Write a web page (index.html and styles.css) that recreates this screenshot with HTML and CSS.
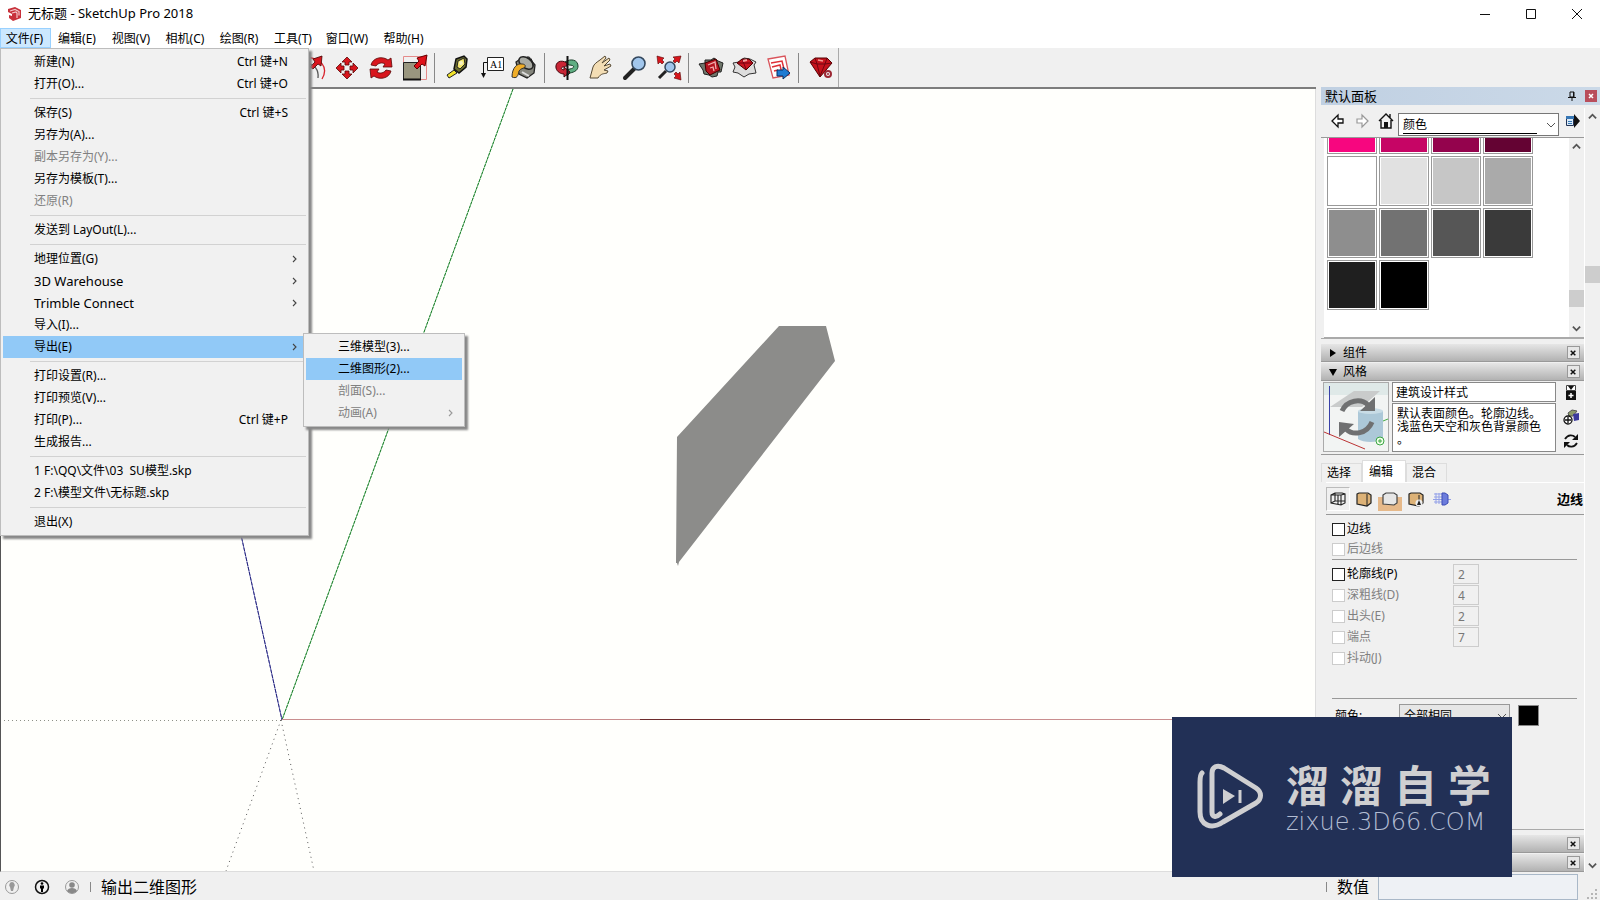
FILE: index.html
```html
<!DOCTYPE html>
<html lang="zh-CN">
<head>
<meta charset="utf-8">
<title>无标题 - SketchUp Pro 2018</title>
<link rel="stylesheet" href="styles.css">
</head>
<body>
<svg class="defs" aria-hidden="true">
  <symbol id="i-close" viewBox="0 0 12 12"><path d="M3 4l5 5M8 4L3 9" stroke="#111" stroke-width="1.6"/></symbol>
  <symbol id="i-chev" viewBox="0 0 10 10"><path d="M3 2l3 3-3 3" fill="none" stroke="currentColor" stroke-width="1.1"/></symbol>
  <symbol id="i-down" viewBox="0 0 10 10"><path d="M1 3l4 4 4-4" fill="none" stroke="currentColor" stroke-width="var(--w, 1)"/></symbol>
  <symbol id="i-up" viewBox="0 0 10 10"><path d="M1 7l4-4 4 4" fill="none" stroke="currentColor" stroke-width="2"/></symbol>
</svg>

<header class="titlebar">
  <svg class="app-icon" viewBox="0 0 14 14"><path d="M0 2l7-2 6 3v8l-8 3-4-3v-3l3 1V7L0 5z" fill="#c8313b"/><path d="M2 4l5-1.500 4 2v4M4 6l4-1 1 1v5" fill="none" stroke="#f3c9cb" stroke-width="1.200"/></svg>
  <h1>无标题 - SketchUp Pro 2018</h1>
  <div class="window-buttons">
    <button aria-label="最小化"><svg viewBox="0 0 12 12"><path d="M1 6.500h10" stroke="#111"/></svg></button>
    <button aria-label="最大化"><svg viewBox="0 0 12 12"><path d="M1.500 1.500h9v9h-9z" stroke="#111" fill="none"/></svg></button>
    <button aria-label="关闭"><svg viewBox="0 0 12 12"><path d="M1 1l10 10M11 1L1 11" stroke="#111"/></svg></button>
  </div>
</header>

<nav class="menubar">
  <button class="open">文件(F)</button><button>编辑(E)</button><button>视图(V)</button><button>相机(C)</button><button>绘图(R)</button><button>工具(T)</button><button>窗口(W)</button><button>帮助(H)</button>
  <div class="menu file-menu">
    <button>新建(N)<span class="key">Ctrl 键+N</span></button>
    <button>打开(O)...<span class="key">Ctrl 键+O</span></button>
    <hr>
    <button>保存(S)<span class="key">Ctrl 键+S</span></button>
    <button>另存为(A)...</button>
    <button disabled>副本另存为(Y)...</button>
    <button>另存为模板(T)...</button>
    <button disabled>还原(R)</button>
    <hr>
    <button>发送到 LayOut(L)...</button>
    <hr>
    <button>地理位置(G)<svg class="arrow"><use href="#i-chev"/></svg></button>
    <button class="latin">3D Warehouse<svg class="arrow"><use href="#i-chev"/></svg></button>
    <button class="latin">Trimble Connect<svg class="arrow"><use href="#i-chev"/></svg></button>
    <button>导入(I)...</button>
    <div class="has-sub">
      <button class="hot">导出(E)<svg class="arrow"><use href="#i-chev"/></svg></button>
      <div class="menu submenu">
        <button>三维模型(3)...</button>
        <button class="hot">二维图形(2)...</button>
        <button disabled>剖面(S)...</button>
        <button disabled>动画(A)<svg class="arrow"><use href="#i-chev"/></svg></button>
      </div>
    </div>
    <hr>
    <button>打印设置(R)...</button>
    <button>打印预览(V)...</button>
    <button>打印(P)...<span class="key">Ctrl 键+P</span></button>
    <button>生成报告...</button>
    <hr>
    <button>1 F:\QQ\文件\03&nbsp; SU模型.skp</button>
    <button>2 F:\模型文件\无标题.skp</button>
    <hr>
    <button>退出(X)</button>
  </div>
</nav>

<div class="toolbar-row">
<div class="toolbar">
  <button aria-label="偏移"><svg viewBox="0 0 28 28"><path d="M6 3c16 1 24 10 17 22" fill="none" stroke="#d8232c" stroke-width="1.300"/><path d="M6 9c10 1 14 7 13 15" fill="none" stroke="#555" stroke-width="1.300"/><path d="M11 13l5-5-2-3 9-3-1 10-3-2-5 5z" fill="#d8161d" stroke="#400" stroke-width=".8"/></svg></button>
  <button aria-label="移动"><svg viewBox="0 0 28 28"><g fill="#d8161d" stroke="#5a0808" stroke-width=".8"><path id="mv" d="M14 3l5 5h-3v3h-4V8H9z"/><use href="#mv" transform="rotate(90 14 14)"/><use href="#mv" transform="rotate(180 14 14)"/><use href="#mv" transform="rotate(270 14 14)"/></g></svg></button>
  <button aria-label="旋转"><svg viewBox="0 0 28 28"><g fill="#d8161d" stroke="#5a0808" stroke-width=".8"><path id="rt" d="M4 11C6 3 16 2 21 6l3-2 1 9-9 0 2-3c-3-2-7-1-9 2z"/><use href="#rt" transform="rotate(180 14 14)"/></g></svg></button>
  <button aria-label="缩放"><svg viewBox="0 0 28 28"><path d="M2.500 2.500h23v23h-23z" fill="none" stroke="#e58a8a"/><path d="M2.500 8.500h17v17h-17z" fill="#99967f" stroke="#222"/><path d="M2 25.500h18" stroke="#111" stroke-width="2"/><path d="M13 12l5-5-2-3 10-3-2 11-3-2-5 5z" fill="#e01119" stroke="#600"/></svg></button>
  <i class="sep"></i>
  <button aria-label="卷尺"><svg viewBox="0 0 28 28"><path d="M4 21l7-5 3 3-8 5z" fill="#f0e22a" stroke="#222"/><path d="M13 5l8-3 3 3-1 8-7 6-5-4z" fill="#6b6d30" stroke="#111" stroke-width="1.500"/><path d="M15 7l6-3 1 6-5 5-3-2z" fill="#f3e66a" stroke="#222"/><circle cx="18" cy="9" r="2" fill="#f7f2c4"/></svg></button>
  <button aria-label="文字"><svg viewBox="0 0 28 28"><path d="M10.500 3.500h16v13h-16z" fill="#fff" stroke="#222"/><text x="13" y="14" class="tag-text">A1</text><path d="M10 8.500H6.500V21" fill="none" stroke="#111"/><path d="M4 19h5l-2.500 5z" fill="#111"/></svg></button>
  <button aria-label="材质"><svg viewBox="0 0 28 28"><path d="M5 8l6-4 7 0 6 7-1 8-7 5-8-4z" fill="#85867d" stroke="#222" stroke-width="1.300"/><ellipse cx="15" cy="9" rx="8" ry="5" fill="#a9aba4" stroke="#222" stroke-width="1.500" transform="rotate(35 15 9)"/><path d="M11 10C6 9 1 14 1 23c5 2 6-1 7-6 2-3 4-2 6-4 1-2-1-3-3-3z" fill="#efad28" stroke="#333"/><path d="M11 18l7 4" stroke="#ddd" stroke-width="2"/><path d="M16 3c3-1 6 3 6 9" fill="none" stroke="#222"/></svg></button>
  <i class="sep"></i>
  <button aria-label="环绕观察"><svg viewBox="0 0 28 28"><path d="M12 8c6-4 13-2 13 4 0 4-3 6-8 7l-3 3-1-6 4-1c5-1 5-4-1-4z" fill="#5fae82" stroke="#163d27"/><path d="M14 9C8 5 2 8 3 14c1 4 5 6 8 6v3l6-5-6-5v3c-4-1-4-3 3-4z" fill="#c92535" stroke="#420b10"/><path d="M14.500 2v24" stroke="#111" stroke-width="2"/></svg></button>
  <button aria-label="平移"><svg viewBox="0 0 28 28"><path d="M3 24l3-11c1-3 4-5 7-7l5-4 1 2-4 5 7-5 1 2-6 6 6-2 1 2-7 4 4 1-1 2c-3 1-6 0-9 5z" fill="#f3ddb4" stroke="#554934"/></svg></button>
  <button aria-label="缩放视图"><svg viewBox="0 0 28 28"><path d="M4 24l9-9" stroke="#222" stroke-width="4" stroke-linecap="round"/><circle cx="17.500" cy="9.500" r="6.500" fill="#a1c6ec" stroke="#33485e" stroke-width="1.600"/></svg></button>
  <button aria-label="充满视窗"><svg viewBox="0 0 28 28"><path d="M4 24l7-7" stroke="#222" stroke-width="3"/><circle cx="15" cy="13" r="5" fill="#a1c6ec" stroke="#33485e" stroke-width="1.500"/><g fill="#d8161d" stroke="#500" stroke-width=".6"><path d="M2 2l7 2-2 2 2 2-2 2-2-2-2 2z"/><path d="M26 2l-2 7-2-2-2 2-2-2 2-2-2-2z"/><path d="M26 26l-7-2 2-2-2-2 2-2 2 2 2-2z"/></g></svg></button>
  <i class="sep"></i>
  <button aria-label="3D Warehouse"><svg viewBox="0 0 28 28"><path d="M2 10l6-1V6l6 0 3-2 4 3 5 2-2 9-3 0-1 4-5 1-3-2-5-1-1-4z" fill="#6f776c" stroke="#222"/><path d="M8 9l11-4 4 11-10 5-4-4z" fill="#b5141f" stroke="#400"/><path d="M11 11l7-3 1 7M13 14l3-1 1 4" fill="none" stroke="#f0b0b0" stroke-width="1.300"/></svg></button>
  <button aria-label="扩展程序"><svg viewBox="0 0 28 28"><path d="M2 9l6-1 5-4 6 1 6 3-2 3 2 8-7 1-5 3-6-4-5-1 2-5z" fill="#ddd" stroke="#333"/><path d="M6 9l5-4h7l4 4-7 7z" fill="#cb1520" stroke="#400"/><path d="M6 9l8 0 8 0M11 5l4 10" stroke="#701" fill="none"/><path d="M12 7l4-1" stroke="#f6a0a0" stroke-width="2"/></svg></button>
  <button aria-label="LayOut"><svg viewBox="0 0 28 28"><path d="M3 5l17-3 4 19-16 3z" fill="#fff" stroke="#d9545b" stroke-width="1.300"/><path d="M6 9l11-2 3 12M7 13l8-2 2 9M9 17l4-1" fill="none" stroke="#df3038" stroke-width="1.500"/><path d="M12 16h6v-3l7 6-7 6v-3h-6z" fill="#1e7ad2" stroke="#0b2f60"/></svg></button>
  <i class="sep"></i>
  <button aria-label="扩展管理器"><svg viewBox="0 0 28 28"><path d="M3 8l5-4h12l5 5-12 14z" fill="#c5121c" stroke="#500"/><path d="M3 8l7 2 3 12 5-12 7-1M8 4l2 6h8l2-6" fill="none" stroke="#700610"/><path d="M11 6l5 1" stroke="#f59a91" stroke-width="1.500"/><circle cx="21" cy="20" r="3" fill="#eee" stroke="#9c2733" stroke-width="2"/><circle cx="21" cy="20" r="1" fill="#9c2733"/></svg></button>
</div>
</div>

<main class="workspace">
  <section class="viewport" aria-label="绘图区">
    <svg viewBox="1 89 1314 782" preserveAspectRatio="xMinYMin slice">
      <path d="M677 437L779 326h47l9 35-156 201-1 4-1-3h-1z" fill="#8c8c8a"/>
      <path d="M513 89L282 720" stroke="#8fd39a"/>
      <path d="M513 89L282 720" stroke="#1c7b2a" stroke-dasharray="3 1"/>
      <path d="M220 440l62 280" stroke="#8f8fd0"/>
      <path d="M220 440l62 280" stroke="#23237a" stroke-dasharray="4 1"/>
      <path d="M282 719.500h1033" stroke="#c98e8e"/>
      <path d="M640 719.500h290" stroke="#6d2b2b"/>
      <path d="M4 720.500h277" stroke="#8d9088" stroke-dasharray="1 3"/>
      <path d="M281 720l-55 151M281 720l33 151" stroke="#555" stroke-dasharray="1 4"/>
    </svg>
  </section>

  <aside class="tray">
    <header class="tray-title"><h2>默认面板</h2>
      <button aria-label="固定"><svg viewBox="0 0 10 10"><path d="M3 1h4v5H3zM1 6.500h8M5 6v4M6.500 1v5" fill="none" stroke="#111"/></svg></button>
      <button class="tray-close" aria-label="关闭面板"><svg viewBox="0 0 12 12"><path d="M4 4l4 4M8 4l-4 4" stroke="#fff" stroke-width="1.500"/></svg></button>
    </header>
    <div class="tray-body">
      <div class="panels">
        <div class="color-nav">
          <button aria-label="后退"><svg viewBox="0 0 16 16"><path d="M2 8l6-6v4h5v4H8v4z" fill="#fff" stroke="#111" stroke-width="1.300"/></svg></button>
          <button aria-label="前进"><svg viewBox="0 0 16 16"><path d="M14 8L8 2v4H3v4h5v4z" fill="#fff" stroke="#999" stroke-width="1.200"/></svg></button>
          <button aria-label="主页"><svg viewBox="0 0 16 16"><path d="M1 8l7-7 7 7M3 7v8h10V7M12 5V1" fill="none" stroke="#111" stroke-width="1.400"/><path d="M6 9h4v6H6z" fill="#111"/></svg></button>
          <div class="picker library"><select aria-label="材质库"><option>颜色</option></select><svg><use href="#i-down"/></svg></div>
          <button aria-label="详细信息"><svg viewBox="0 0 16 16"><path d="M5 4h4V1l6 7-6 7v-3H5z" fill="#111"/><path d="M1.500 3.500h7v9h-7z" fill="#d9e9f7" stroke="#235"/><path d="M1 3h8v3H1z" fill="#3777b5"/><path d="M3 8.500h4M3 10.500h4" stroke="#3777b5"/></svg></button>
        </div>
        <div class="swatch-area">
          <div class="swatches">
            <button class="cut c1" aria-label="颜色 1"></button><button class="cut c2" aria-label="颜色 2"></button><button class="cut c3" aria-label="颜色 3"></button><button class="cut c4" aria-label="颜色 4"></button>
            <button class="g1" aria-label="灰度 1"></button><button class="g2" aria-label="灰度 2"></button><button class="g3" aria-label="灰度 3"></button><button class="g4" aria-label="灰度 4"></button>
            <button class="g5" aria-label="灰度 5"></button><button class="g6" aria-label="灰度 6"></button><button class="g7" aria-label="灰度 7"></button><button class="g8" aria-label="灰度 8"></button>
            <button class="g9" aria-label="灰度 9"></button><button class="g10" aria-label="灰度 10"></button>
          </div>
          <div class="scroll inner"><svg><use href="#i-up"/></svg><i></i><svg><use href="#i-down"/></svg></div>
        </div>
        <div class="panel-heads">
          <h3><svg viewBox="0 0 8 8"><path d="M1 0l6 4-6 4z"/></svg>组件<button aria-label="关闭组件"><svg><use href="#i-close"/></svg></button></h3>
          <h3><svg viewBox="0 0 8 8"><path d="M0 1h8L4 8z"/></svg>风格<button aria-label="关闭风格"><svg><use href="#i-close"/></svg></button></h3>
        </div>
        <div class="style-info">
          <div class="preview"><svg viewBox="0 0 64 68">
            <path d="M0 0h64v68H0z" fill="#f2f4f3"/><path d="M0 0h64v12H0z" fill="#dfe9e8"/><path d="M6 24L30 8h26L38 24z" fill="#c9cbcb"/>
            <path d="M34 28v28c5 4 20 4 25 0V28z" fill="#acc8d8"/><ellipse cx="46.500" cy="28" rx="12.500" ry="3" fill="#c8dce6"/>
            <path d="M5.500 52V3" stroke="#3941a8"/><path d="M0 49l41 17" stroke="#b33"/><path d="M59 38l5-2" stroke="#4a4"/>
            <g stroke="#6f7071" stroke-width="5" fill="none"><path d="M18 28C23 17 37 15 44 22"/><path d="M48 39C43 51 29 53 22 46"/></g>
            <path d="M51 14v14H36zM15 54V39l15 2z" fill="#6f7071"/>
            <circle cx="56" cy="58" r="4" fill="#efffe8" stroke="#3aa544"/><path d="M56 56v4M54 58h4" stroke="#3aa544"/></svg></div>
          <div class="style-text">
            <input aria-label="风格名称" value="建筑设计样式">
            <textarea aria-label="风格说明">默认表面颜色。轮廓边线。浅蓝色天空和灰色背景颜色。</textarea>
          </div>
          <div class="style-tools">
            <button aria-label="显示辅助窗格"><svg viewBox="0 0 16 16"><path d="M3.500 1.500h9v5h-9z" fill="#fff" stroke="#444"/><path d="M5 2h6L8 6zM3 7h10v9H3z" fill="#111"/><path d="M8 9v5M5.500 11.500h5" stroke="#fff" stroke-width="1.500"/></svg></button>
            <button aria-label="新建风格"><svg viewBox="0 0 16 16"><path d="M5 4l4-3 5 1-4 5H6z" fill="#8c9a6a" stroke="#555"/><path d="M10 5l6-1v7l-5 1z" fill="#3b3a9c"/><circle cx="5" cy="11" r="4" fill="#fff" stroke="#111" stroke-width="1.300"/><path d="M5 8v6M2 11h6" stroke="#111" stroke-width="1.300"/></svg></button>
            <button aria-label="更新风格"><svg viewBox="0 0 16 16"><g fill="none" stroke="#111" stroke-width="1.800"><path d="M2 6c3-5 8-4 10-2M14 10c-3 5-8 4-10 2"/></g><path d="M15 1v6H9zM1 15V9h6z" fill="#111"/></svg></button>
          </div>
        </div>
        <div class="tabs"><button>选择</button><button class="active">编辑</button><button>混合</button></div>
        <div class="edit-bar">
          <button class="pressed" aria-label="边线设置"><svg viewBox="0 0 18 16"><path d="M2 4l4-2 7 0 3 1v9l-4 2-10-2zM12 4v10M2 4l10 0 4-1M2 12l4-2h10M6 2v8M9 4v9" fill="none" stroke="#222" stroke-width="1.100"/></svg></button>
          <button aria-label="平面设置"><svg viewBox="0 0 18 16"><path d="M2 3l2-1h9l3 2v8l-4 3-10-2z" fill="#ddb277" stroke="#222" stroke-width="1.200"/><path d="M12 3v12" fill="none" stroke="#222"/></svg></button>
          <button class="bg" aria-label="背景设置"><svg viewBox="0 0 18 16"><path d="M2 4l3-2h8l3 2v8l-3 2-11-1z" fill="#e6e6e6" stroke="#444" stroke-width="1.200"/></svg></button>
          <button aria-label="水印设置"><svg viewBox="0 0 18 16"><path d="M2 3l2-1h9l3 2v8l-4 3-10-2z" fill="#ddb277" stroke="#222" stroke-width="1.200"/><path d="M12 4v5" stroke="#222"/><circle cx="12" cy="12" r="3.500" fill="#eee"/><path d="M12 9l2 5h-4z" fill="#222"/></svg></button>
          <button aria-label="建模设置"><svg viewBox="0 0 18 16"><path d="M1 3h9M1 6h9M0 8.500h18M1 11h9M3 2v11M6 2v11" stroke="#92a0e8"/><path d="M9 2h3l3 2v8l-3 2H9z" fill="#6c7cdc" stroke="#3c4cb5"/></svg></button>
          <strong>边线</strong>
        </div>
        <form class="options">
          <div class="pair"><label><input type="checkbox">边线</label><label class="off"><input type="checkbox" disabled>后边线</label></div>
          <div class="rows">
            <div><label><input type="checkbox">轮廓线(P)</label><input class="num" aria-label="轮廓线宽度" value="2" disabled></div>
            <div><label class="off"><input type="checkbox" disabled>深粗线(D)</label><input class="num" aria-label="深粗线宽度" value="4" disabled></div>
            <div><label class="off"><input type="checkbox" disabled>出头(E)</label><input class="num" aria-label="出头长度" value="2" disabled></div>
            <div><label class="off"><input type="checkbox" disabled>端点</label><input class="num" aria-label="端点长度" value="7" disabled></div>
            <div><label class="off"><input type="checkbox" disabled>抖动(J)</label></div>
          </div>
          <div class="color-row"><label for="edge-color">颜色:</label><div class="picker"><select id="edge-color"><option>全部相同</option></select><svg><use href="#i-down"/></svg></div><button type="button" class="chip" aria-label="边线颜色"></button></div>
        </form>
        <div class="panel-heads last">
          <h3><button aria-label="关闭图层"><svg><use href="#i-close"/></svg></button></h3>
          <h3><button aria-label="关闭场景"><svg><use href="#i-close"/></svg></button></h3>
        </div>
      </div>
      <div class="scroll outer"><svg><use href="#i-up"/></svg><i></i><svg><use href="#i-down"/></svg></div>
    </div>
  </aside>
</main>

<footer class="status">
  <svg viewBox="0 0 16 16"><circle cx="8" cy="8" r="6.500" fill="none" stroke="#999"/><path d="M8 3a3 3 0 0 1 2 5l-1 4H7L6 8a3 3 0 0 1 2-5z" fill="#999"/></svg>
  <svg viewBox="0 0 16 16"><circle cx="8" cy="8" r="6.500" fill="none" stroke="#111" stroke-width="1.500"/><circle cx="8" cy="4.500" r="1.300"/><path d="M6 6.500h4v3H9V13H7V9.500H6z"/></svg>
  <svg viewBox="0 0 16 16"><circle cx="8" cy="8" r="6.500" fill="none" stroke="#999"/><circle cx="8" cy="6" r="2.800" fill="#888"/><path d="M3 12c1-4 9-4 10 0-3 3-7 3-10 0z" fill="#888"/></svg>
  <i></i><span class="hint">输出二维图形</span>
  <i></i><label for="vcb">数值</label><input id="vcb">
  <svg class="grip" viewBox="0 0 12 12"><path d="M9 1h2v2H9zM9 5h2v2H9zM9 9h2v2H9zM5 5h2v2H5zM5 9h2v2H5zM1 9h2v2H1z" fill="#b5b5b5"/></svg>
</footer>

<div class="brand">
  <svg viewBox="0 0 66 68"><path d="M5 10C3 12 3 15 3 19v30c0 13 11 18 23 10l33-19c6-4 6-11 0-15L27 5c-7-4-12-1-12 5v39c0 5 4 6 8 2" fill="none" stroke="#cfcfd1" stroke-width="5" stroke-linecap="round" stroke-linejoin="round"/><path d="M26 26l12 7-12 8z" fill="#cfcfd1"/><path d="M43 27v13" stroke="#cfcfd1" stroke-width="3"/></svg>
  <div><div class="brand-name"><span>溜</span><span>溜</span><span>自</span><span>学</span></div><div class="brand-url">zixue.3D66.COM</div></div>
</div>
</body>
</html>
```
FILE: styles.css
```css
* { box-sizing: border-box; }
body {
  margin: 0; height: 100vh; display: flex; flex-direction: column; overflow: hidden;
  position: relative; background: #f0f0f0; color: #000;
  font: 12px/16px "Noto Sans", "Noto Sans CJK SC", sans-serif;
}
button, input, select, textarea { font: inherit; color: inherit; margin: 0; border-radius: 0; }
button { border: 0; padding: 0; background: none; }
h1, h2, h3 { margin: 0; font-weight: 400; font-size: 12px; }
svg { display: block; flex: none; }
.defs { position: absolute; width: 0; height: 0; }

.titlebar { display: flex; align-items: center; height: 28px; padding-left: 8px; background: #fff; flex: none; }
.app-icon { width: 14px; height: 14px; margin-right: 6px; }
.titlebar h1 { font-size: 13px; line-height: 20px; padding-bottom: 2px; }
.window-buttons { display: flex; margin-left: auto; }
.window-buttons button { width: 46px; height: 28px; display: grid; place-items: center; }
.window-buttons svg { width: 12px; height: 12px; }

.menubar { position: relative; z-index: 5; display: flex; height: 20px; background: #fff; flex: none; }
.menubar > button { width: 54px; border: 1px solid transparent; white-space: nowrap; line-height: 18px; padding: 1px 2px 0 0; }
.menubar > button:nth-child(n+8) { width: 59px; }
.menubar > .open { width: 51px; background: #cce8ff; border-color: #99d1ff; }

.menu { position: absolute; background: #f1f1f1; border: 1px solid #bdbdbd; padding: 2px; box-shadow: 3px 3px 2px #888; }
.file-menu { left: 0; top: 20px; width: 309px; }
.menu button { display: flex; align-items: center; width: 100%; height: 22px; padding: 0 10px 0 31px; text-align: left; white-space: pre; }
.menu .latin { font-size: 13px; line-height: 20px; padding-bottom: 1px; }
.menu button:disabled { color: #808080; }
.menu .hot { background: #91c9f7; }
.menu hr { height: 1px; margin: 3px 0 3px 27px; border: 0; background: #d2d2d2; }
.key { margin-left: auto; padding-right: 8px; }
.arrow { width: 10px; height: 10px; margin-left: auto; margin-right: -4px; color: #444; }
.menu :disabled .arrow { color: #999; }
.has-sub { position: relative; }
.submenu { left: 300px; top: -3px; width: 162px; }
.submenu button { padding-left: 32px; }
.has-sub > button { width: 300px; padding-right: 7px; }

.toolbar-row { flex: none; height: 41px; padding-left: 296px; border-bottom: 2px solid #7d7d7d; display: flex; background: #f0f0f0; }
.toolbar { display: flex; align-items: center; border-right: 1px solid #aaa; }
.toolbar button { width: 34px; height: 34px; display: grid; place-items: center; }
.toolbar svg { width: 28px; height: 28px; }
.tag-text { font: 10px "Liberation Serif", serif; }
.sep { width: 1px; height: 30px; background: #888; margin: 0 5px 0 2px; }

.workspace { flex: 1; min-height: 0; display: flex; }
.viewport { flex: 1; min-width: 0; background: #fffffc; border-left: 1px solid #555; border-right: 1px solid #ddd; border-bottom: 1px solid #ddd; }
.viewport svg { width: 100%; height: 100%; }

.tray { width: 284px; flex: none; display: flex; flex-direction: column; padding-left: 5px; margin-top: -2px; background: #f0f0f0; z-index: 1; }
.tray-title { display: flex; align-items: center; gap: 8px; height: 18px; padding: 0 3px 0 4px; background: linear-gradient(90deg, #c0d0e2, #cbd9e8); flex: none; }
.tray-title h2 { margin-right: auto; font-size: 13px; }
.tray-title svg { width: 10px; height: 10px; }
.tray-title .tray-close { background: #b94e5c; }
.tray-title .tray-close svg { width: 12px; height: 12px; }
.tray-body { flex: 1; min-height: 0; display: flex; padding-top: 3px; }
.panels { flex: 1; min-width: 0; display: flex; flex-direction: column; }

.color-nav { display: flex; align-items: center; gap: 8px; height: 30px; padding-left: 9px; border-bottom: 1px solid #999; }
.color-nav > button { padding-bottom: 3px; }
.color-nav svg { width: 16px; height: 16px; }
.color-nav > button:last-child { margin-left: -2px; margin-right: 3px; }
.picker { position: relative; }
.picker select { width: 100%; height: 23px; padding: 0 4px; border: 1px solid #999; appearance: none; background: #e6e6e6; display: block; }
.picker svg { position: absolute; right: 3px; top: 7px; width: 10px; height: 10px; color: #555; pointer-events: none; }
.library { flex: 1; margin-left: -4px; padding-top: 4px; }
.library select { background: #fff; border-color: #777; }
.library svg { top: 11px; width: 10px; height: 10px; }
.library::after { content: ""; position: absolute; left: 5px; right: 22px; bottom: 2px; height: 1px; background: #000; }

.swatch-area { display: flex; margin-left: 3px; height: 200px; background: #fff; border-bottom: 1px solid #aaa; }
.swatches { flex: 1; display: grid; grid-template-columns: repeat(4, 50px); grid-template-rows: 16px repeat(3, 50px); gap: 2px; padding-left: 3px; }
.swatches button { border: 1px solid #999; box-shadow: inset 0 0 0 1px #fff; }
.swatches .cut { border-top: 0; box-shadow: inset 1px -1px 0 #fff, inset -1px 0 0 #fff; }
.c1 { background: #f7067f; } .c2 { background: #c60565; } .c3 { background: #94034d; } .c4 { background: #640333; }
.g1 { background: #fff; } .g2 { background: #e1e1e1; } .g3 { background: #c6c6c6; } .g4 { background: #aaa; }
.g5 { background: #8e8e8e; } .g6 { background: #727272; } .g7 { background: #565656; } .g8 { background: #3a3a3a; }
.g9 { background: #1f1f1f; } .g10 { background: #000; }

.scroll { width: 15px; display: flex; flex-direction: column; align-items: center; background: #f0f0f0; color: #555; --w: 2; }
.scroll svg { width: 9px; height: 9px; }
.scroll i { width: 100%; height: 17px; background: #cdcdcd; }
.inner { padding: 4px 0; }
.inner i { margin: auto 0 17px; }
.outer { width: 16px; padding: 4px 0 2px; border-left: 1px solid #fff; }
.outer i { margin: 145px 0 auto; }

.panel-heads { display: flex; flex-direction: column; gap: 1px; padding-top: 5px; border-top: 1px solid #aaa; }
.panel-heads h3 { display: flex; align-items: center; gap: 6px; height: 18px; padding: 0 4px 0 8px; background: linear-gradient(#e6e6e6, #b2b2b2); border-bottom: 1px solid #999; }
.panel-heads h3 > svg { width: 8px; height: 8px; }
.panel-heads button { margin-left: auto; border: 1px solid #999; background: #e7e7e7; }
.panel-heads button svg { width: 11px; height: 11px; }
.last { margin-top: auto; }

.style-info { display: flex; gap: 3px; padding: 1px 0 2px 2px; border-bottom: 1px solid #999; }
.preview { width: 66px; height: 70px; border: 1px solid #aaa; }
.preview svg { width: 64px; height: 68px; }
.style-text { flex: 1; min-width: 0; display: flex; flex-direction: column; gap: 1px; }
.style-text input { width: 100%; height: 20px; padding: 0 3px; border: 1px solid #888; background: #fff; }
.style-text textarea { display: block; width: 100%; height: 49px; padding: 3px 4px; border: 1px solid #888; background: #fff; line-height: 13px; resize: none; overflow: hidden; line-break: anywhere; }
.style-tools { display: flex; flex-direction: column; justify-content: space-between; padding: 2px 5px 3px 4px; }
.style-tools svg { width: 16px; height: 16px; }

.tabs { display: flex; align-items: flex-end; margin-top: 5px; }
.tabs button { width: 41px; height: 19px; border: 1px solid #ddd; border-bottom: 0; text-align: left; padding-left: 5px; }
.tabs .active { width: 44px; height: 22px; background: #fff; padding-left: 6px; }
.edit-bar { display: flex; align-items: center; gap: 2px; height: 33px; margin-left: 5px; padding: 3px 1px 3px 0; border-bottom: 1px solid #999; border-top: 1px solid #fff; }
.edit-bar button { width: 24px; height: 24px; display: grid; place-items: center; }
.edit-bar svg { width: 18px; height: 16px; }
.edit-bar .pressed { border: 1px solid #bbb; border-right-color: #fff; border-bottom-color: #fff; }
.edit-bar .bg { background: linear-gradient(transparent 40%, #e6b98a 40%); }
.edit-bar strong { margin-left: auto; font-size: 13px; }

.options { padding: 4px 7px 0 11px; }
.options label { display: flex; align-items: center; gap: 2px; height: 20px; }
.options .off { color: #808080; }
.options [type=checkbox] { appearance: none; width: 13px; height: 13px; border: 1px solid #222; background: #fff; }
.options [type=checkbox]:disabled { border-color: #ccc; }
.pair { border-bottom: 1px solid #999; }
.rows { padding: 4px 0 29px; border-bottom: 1px solid #999; }
.rows > div { display: grid; grid-template-columns: 121px 26px; height: 21px; }
.num { width: 26px; height: 20px; padding: 0 4px; border: 1px solid #ccc; background: #f0f0f0; }
.num:disabled { color: #777; }
.color-row { display: flex; align-items: center; padding: 5px 0 0 3px; }
.color-row label { width: 64px; }
.color-row .picker { width: 111px; }
.color-row .chip { width: 21px; height: 21px; margin-left: 8px; background: #000; border: 1px solid #888; }

.status { display: flex; align-items: center; gap: 14px; height: 28px; flex: none; padding: 2px 6px 0 4px; font-size: 16px; line-height: 24px; background: #f0f0f0; }
.status svg { width: 16px; height: 16px; }
.status i { width: 1px; height: 10px; background: #888; margin: 0 -4px; }
.status .hint { margin-right: auto; }
.status input { width: 200px; height: 26px; margin-left: -5px; border: 1px solid #a9b8c8; background: #eef1f5; }
.status .grip { width: 12px; height: 12px; align-self: flex-end; margin-left: -6px; margin-right: -4px; }

.brand { position: absolute; z-index: 8; right: 88px; bottom: 23px; width: 340px; height: 160px; display: flex; align-items: center; gap: 23px; padding-left: 25px; background: #223056; color: #cfcfd1; }
.brand > svg { width: 66px; height: 68px; }
.brand-name { display: flex; gap: 11px; font: 700 43px/50px "Noto Sans CJK SC", sans-serif; }
.brand-url { font: 200 24px/28px "DejaVu Sans", sans-serif; color: #b3bdd3; }
```
